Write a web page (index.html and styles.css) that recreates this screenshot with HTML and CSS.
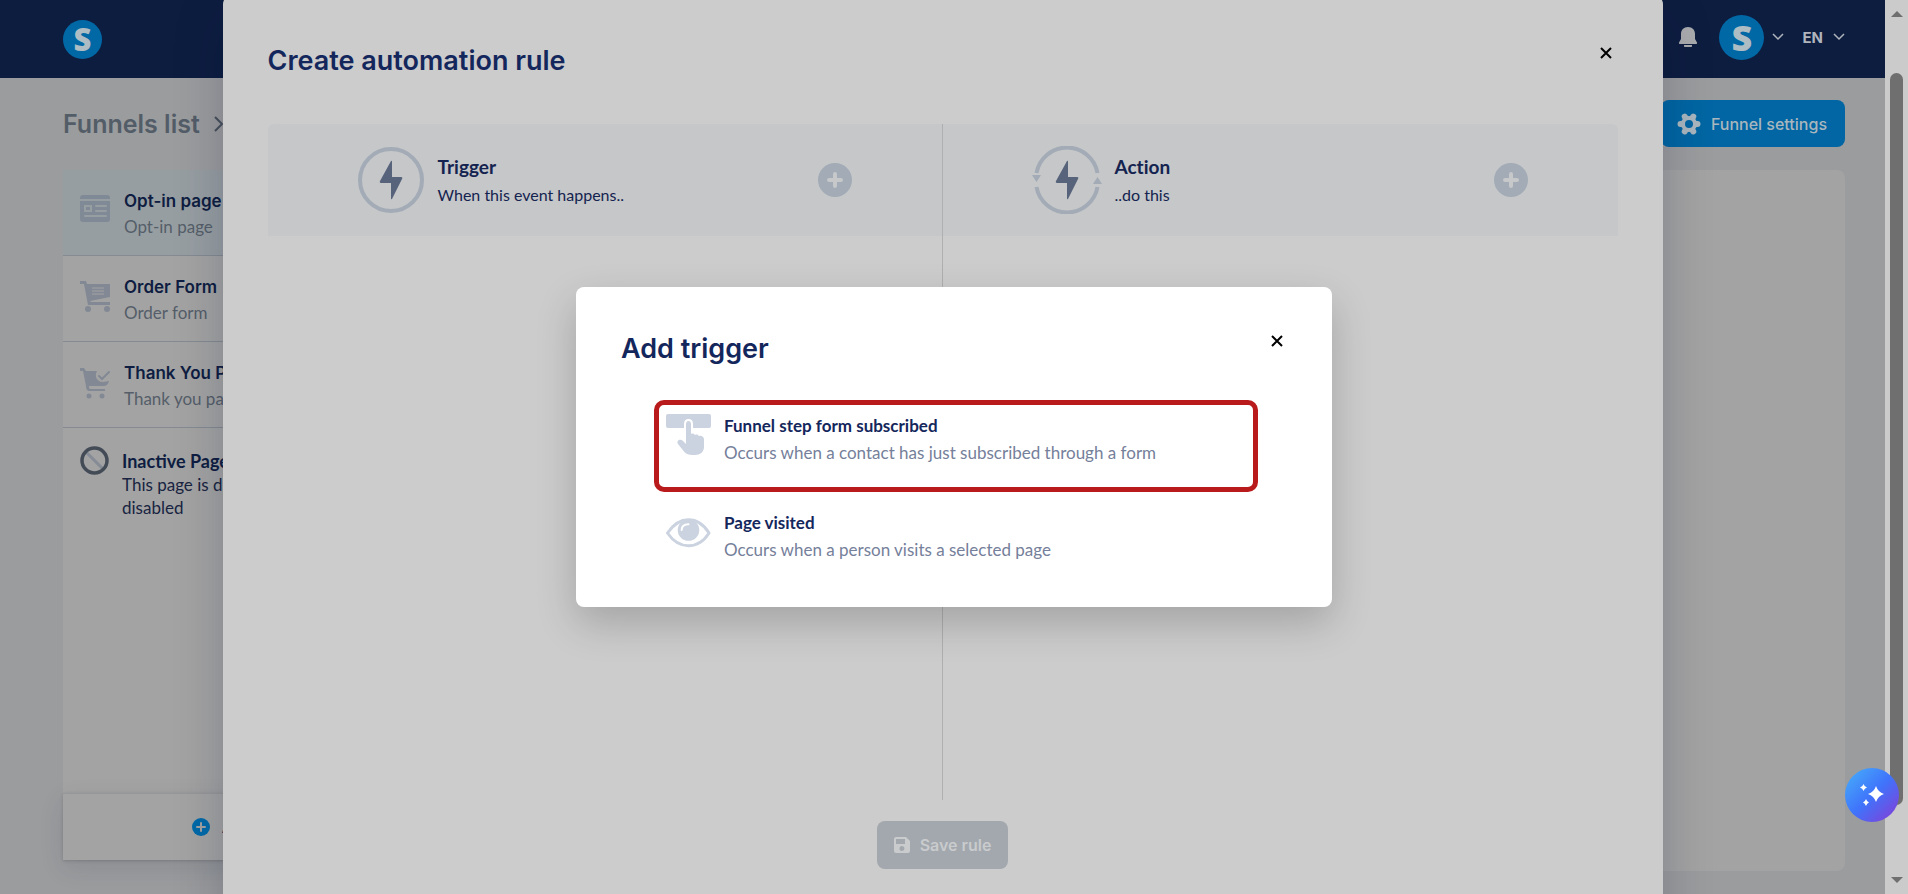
FILE: index.html
```
<!DOCTYPE html>
<html lang="en">
<head>
  <meta charset="UTF-8">
  <meta name="viewport" content="width=device-width, initial-scale=1.0">
  <title>Create automation rule</title>
  <link rel="stylesheet" href="styles.css">
</head>
<body>
  <div class="page">
    <header class="topbar">
      <a class="logo" href="#">S</a>
      <div class="topbar-right">
        <button class="icon-btn" aria-label="Notifications">
          <svg width="18" height="20" viewBox="0 0 18 20" fill="#a9abae"><path d="M9 0C4.600 0 2 3.200 2 7v5L0 15.500c-.3 1 .2 1.500 1 1.500h16c.8 0 1.300-.5 1-1.500L16 12V7c0-3.800-2.600-7-7-7z"/><path d="M5 18h8v1c0 .6-.4 1-1 1H6c-.6 0-1-.4-1-1z"/></svg>
        </button>
        <button class="profile" aria-label="Profile">
          <span class="avatar">S</span>
          <svg width="12" height="8" viewBox="0 0 12 8"><path class="chevron" d="M1 1l5 5 5-5"/></svg>
        </button>
        <button class="lang">EN
          <svg width="12" height="8" viewBox="0 0 12 8"><path class="chevron" d="M1 1l5 5 5-5"/></svg>
        </button>
      </div>
    </header>

    <div class="page-head">
      <nav class="breadcrumb">
        <a href="#">Funnels list</a>
        <svg width="10" height="16" viewBox="0 0 10 16"><path d="M1 1l7 7-7 7" fill="none" stroke="#48515c" stroke-width="2"/></svg>
      </nav>
      <button class="settings-btn">
        <svg width="24" height="22" viewBox="0 0 24 22"><g stroke="#a9b6be" stroke-width="6" stroke-linecap="round"><path d="M3.500 11h17M7.700 3.600l8.600 14.800M16.300 3.600L7.700 18.400"/></g><circle cx="12" cy="11" r="8" fill="#a9b6be"/><circle cx="12" cy="11" r="4" fill="#0166a3"/></svg>
        Funnel settings
      </button>
    </div>

    <main class="content">
      <aside class="steps">
        <ul class="step-list">
          <li class="step active">
            <svg width="30" height="32" viewBox="0 0 30 32"><path fill="#808996" d="M3 0h24a3 3 0 0 1 3 3v1H0V3a3 3 0 0 1 3-3zM0 6h30v18a3 3 0 0 1-3 3H3a3 3 0 0 1-3-3z"/><path fill="none" stroke="#979ea2" stroke-width="2" stroke-linecap="round" d="M5 11h6v5H5zM16 11h10M16 16h10M5 21h21"/></svg>
            <div><h4>Opt-in page</h4><p>Opt-in page</p></div>
          </li>
          <li class="step">
            <svg width="30" height="32" viewBox="0 0 30 32"><g fill="#828994"><path d="M0 0h6l1 3h23v13L10 20l1 1h19v3H8L4 3H0z"/><circle cx="8" cy="28" r="3"/><circle cx="27" cy="28" r="3"/></g><path stroke="#a3a3a3" stroke-width="1" d="M12 7h12M12 10h12M12 13h12"/></svg>
            <div><h4>Order Form</h4><p>Order form</p></div>
          </li>
          <li class="step">
            <svg width="30" height="32" viewBox="0 0 30 32"><g fill="#828994"><path d="M0 1h4l2 3h11c-3 5 0 11 6 11l6-1c-1 4-3 5-6 5H9c0 2 0 3 2 3h14v2H10c-3 0-4-2-4-5L3 4H0z"/><circle cx="9" cy="29" r="2.500"/><circle cx="22" cy="29" r="2.500"/></g><path fill="none" stroke="#828994" stroke-width="2" stroke-linecap="round" d="M19 9l3 3 7-7"/></svg>
            <div><h4>Thank You Page</h4><p>Thank you page</p></div>
          </li>
          <li class="step inactive">
            <svg width="29" height="29" viewBox="0 0 29 29" fill="none"><path d="M5 5l19 19" stroke="#858c96" stroke-width="3"/><circle cx="14.500" cy="14.500" r="12.500" stroke="#434b57" stroke-width="3.500"/></svg>
            <div><h4>Inactive Page</h4><p>This page is disabled<br>disabled</p></div>
          </li>
        </ul>
        <button class="add-step">
          <svg width="18" height="18" viewBox="0 0 18 18"><circle cx="9" cy="9" r="9" fill="#016aa8"/><path d="M9 5v8M5 9h8" stroke="#a3a3a3" stroke-width="2" stroke-linecap="round"/></svg>
          Add step
        </button>
      </aside>
      <section class="panel"></section>
    </main>

    <div class="rule-overlay">
      <div class="rule-modal">
        <div class="rule-head">
          <h2>Create automation rule</h2>
          <button class="close" aria-label="Close"><svg width="12" height="12" viewBox="0 0 12 12"><path d="M1 1l10 10M11 1L1 11"/></svg></button>
        </div>
        <div class="rule-columns">
          <div class="rule-column">
            <div class="rule-band">
              <svg width="68" height="68" viewBox="0 0 68 68"><circle cx="34" cy="34" r="31" fill="none" stroke="#a3abb6" stroke-width="4"/><path class="bolt" d="M34 15q1-1 1 1v15h9q2 0 1 2L35 53q-1 1-1-1V37h-9q-3 0-2-2z"/></svg>
              <div class="rule-text"><h3>Trigger</h3><p>When this event happens..</p></div>
              <button class="plus" aria-label="Add trigger"><svg width="34" height="34" viewBox="0 0 34 34"><circle cx="17" cy="17" r="17" fill="#a2abb6"/><path d="M17 11v12M11 17h12" stroke="#c6c8ca" stroke-width="4" stroke-linecap="round"/></svg></button>
            </div>
          </div>
          <div class="rule-column">
            <div class="rule-band">
              <svg class="action-icon" width="70" height="68" viewBox="0 0 70 68"><path d="M4.500 27a31 31 0 0 1 61 0M65.500 41a31 31 0 0 1-61 0" fill="none" stroke="#a3abb6" stroke-width="4"/><path d="M0 29h9l-4.500 7zM61 38h9l-4.500-7z" fill="#a3abb6"/><path class="bolt" d="M35 15q1-1 1 1v15h9q2 0 1 2L36 53q-1 1-1-1V37h-9q-3 0-2-2z"/></svg>
              <div class="rule-text"><h3>Action</h3><p>..do this</p></div>
              <button class="plus" aria-label="Add action"><svg width="34" height="34" viewBox="0 0 34 34"><circle cx="17" cy="17" r="17" fill="#a2abb6"/><path d="M17 11v12M11 17h12" stroke="#c6c8ca" stroke-width="4" stroke-linecap="round"/></svg></button>
            </div>
          </div>
        </div>
        <button class="save-btn">
          <svg width="16" height="16" viewBox="0 0 16 16"><path fill="#c9cbcd" fill-rule="evenodd" d="M2 0h10l4 4v10a2 2 0 0 1-2 2H2a2 2 0 0 1-2-2V2a2 2 0 0 1 2-2zm0 2v5h9V2zm6 7a2 2 0 1 0 0 5 2 2 0 0 0 0-5z"/></svg>
          Save rule
        </button>
      </div>
    </div>
  </div>

  <div class="scrollbar">
    <svg width="12" height="6" viewBox="0 0 12 6"><path d="M0 6l6-6 6 6z" fill="#6f6f6f"/></svg>
    <div class="track"><div class="thumb"></div></div>
    <svg width="12" height="6" viewBox="0 0 12 6"><path d="M0 0h12L6 6z" fill="#6f6f6f"/></svg>
  </div>

  <div class="trigger-overlay">
    <div class="trigger-modal">
      <div class="trigger-head">
        <h2>Add trigger</h2>
        <button class="close" aria-label="Close"><svg width="12" height="12" viewBox="0 0 12 12"><path d="M1 1l10 10M11 1L1 11"/></svg></button>
      </div>
      <div class="options">
        <button class="option selected">
          <svg width="45" height="42" viewBox="0 0 45 42"><rect x="0" y="0" width="45" height="14" rx="2" fill="#cbd3e0"/><path d="M20 10c0-4 5-4 5 0v10c2-1 3 0 4 1 2-1 3 0 4 1 2-1 5 1 5 3v8c0 5-4 8-9 8h-3c-5 0-8-3-10-6l-4-5c-2-3 2-6 5-3l3 3z" fill="#cbd3e0" stroke="#fff" stroke-width="4" paint-order="stroke"/></svg>
          <span class="option-text"><strong>Funnel step form subscribed</strong><span>Occurs when a contact has just subscribed through a form</span></span>
        </button>
        <button class="option">
          <svg class="eye" width="45" height="30" viewBox="0 0 46 30"><path d="M1.500 15C8 5.500 15 1.500 23 1.500S38 5.500 44 15C38 24.500 31 28 23 28S8 24.500 1.500 15z" fill="none" stroke="#cbd3e0" stroke-width="3" stroke-linejoin="round"/><circle cx="23" cy="12" r="11" fill="#cbd3e0"/><path d="M16 12c0-4 3-6 7-6" fill="none" stroke="#fff" stroke-width="2" stroke-linecap="round"/></svg>
          <span class="option-text"><strong>Page visited</strong><span>Occurs when a person visits a selected page</span></span>
        </button>
      </div>
    </div>
  </div>

  <button class="ai-btn" aria-label="AI assistant">
    <svg width="24" height="22" viewBox="0 0 24 22" fill="#fff"><path d="M16 2q2 6 8 8-6 2-8 8-2-6-8-8 6-2 8-8zM3.500 0Q4.500 3 7 3.500 4.500 4 3.500 7 2.500 4 0 3.500 2.500 3 3.500 0zM6 15q1 3 3 3.500Q7 19 6 22q-1-3-3-3.500Q5 18 6 15z"/></svg>
  </button>
</body>
</html>
```

FILE: styles.css
```
* { box-sizing: border-box; }
body { margin: 0; height: 100vh; display: flex; overflow: hidden; position: relative; font-family: Lato, sans-serif; font-size: 16px; font-variant-ligatures: none; color: #14234f; background: #9b9c9e; }
h2, h3, h4, p, ul { margin: 0; padding: 0; }
button { font: inherit; color: inherit; border: 0; padding: 0; background: none; cursor: pointer; }
a { color: inherit; text-decoration: none; }
svg { flex: none; display: block; }

/* page behind the dialogs */
.page { flex: 1; min-width: 0; display: flex; flex-direction: column; position: relative; overflow: hidden; }
.topbar { height: 78px; flex: none; padding: 0 40px 0 63px; display: flex; align-items: center; justify-content: space-between; background: #0d1d40; color: #b0b4bc; }
.logo, .avatar { display: flex; align-items: center; justify-content: center; border-radius: 50%; background: #0168a6; color: #aebcc4; font-family: "Open Sans", sans-serif; font-weight: 800; }
.logo { width: 39px; height: 39px; font-size: 31px; line-height: 39px; }
.avatar { width: 45px; height: 45px; font-size: 36px; line-height: 45px; }
.topbar-right { display: flex; align-items: center; height: 74px; align-self: flex-start; }
.profile { display: flex; align-items: center; gap: 8px; margin: 0 18px 0 22px; }
.lang { display: flex; align-items: center; gap: 10px; font: 700 15px Inter, sans-serif; }
.chevron { fill: none; stroke: #b0b4bc; stroke-width: 1.5; }

.page-head { display: flex; justify-content: space-between; align-items: center; padding: 22px 40px 23px 63px; }
.breadcrumb { display: flex; align-items: center; gap: 14px; font: 600 25px Inter, sans-serif; color: #535d68; }
.settings-btn { height: 47px; padding: 0 18px 0 16px; display: flex; align-items: center; gap: 10px; border-radius: 8px; background: #0166a3; color: #a9b6be; font: 500 16px Inter, sans-serif; }

.content { flex: 1; min-height: 0; display: flex; gap: 24px; padding: 0 40px 23px 63px; }
.steps { width: 356px; margin-bottom: 11px; display: flex; flex-direction: column; background: #a3a3a3; }
.step-list { flex: 1; list-style: none; }
.step { display: flex; gap: 14px; height: 86px; padding: 21px 17px 0; border-bottom: 1px solid #858b91; }
.step svg { margin-top: 4px; }
.step.active { background: #979ea2; }
.step.inactive { gap: 13px; border: 0; height: auto; }
.step.inactive svg { margin-top: -3px; }
.step h4 { font: 600 17px/20px Inter, sans-serif; color: #0e1d41; white-space: nowrap; }
.step p { margin-top: 4px; font-size: 17px; line-height: 24px; color: #555e69; white-space: nowrap; }
.step.inactive h4 { font-family: Lato, sans-serif; font-weight: 700; font-size: 18px; line-height: 24px; }
.step.inactive p { margin-top: 0; line-height: 23px; color: #182441; }
.add-step { height: 67px; display: flex; align-items: center; justify-content: center; gap: 12px; border-top: 1px solid #969798; box-shadow: 0 8px 24px rgba(20, 30, 60, .12), 0 1px 3px rgba(0, 0, 0, .15); color: #14234f; font: 500 16px Inter, sans-serif; }
.panel { flex: 1; border-radius: 8px; background: #a3a3a3; }

/* automation rule dialog */
.rule-overlay { position: absolute; inset: 0; display: flex; justify-content: center; }
.rule-modal { width: 1440px; height: calc(100vh + 60px); margin-top: -4px; padding: 46px 45px 0; display: flex; flex-direction: column; align-items: center; border-radius: 8px; background: #ccc; box-shadow: 0 20px 50px rgba(10, 20, 50, .22); flex: none; }
.rule-head { width: 100%; display: flex; justify-content: space-between; align-items: flex-start; height: 82px; }
h2 { font: 600 27px/38px Inter, sans-serif; color: #14275c; }
.close { width: 24px; height: 22px; display: flex; align-items: center; justify-content: center; }
.close path { stroke: #000; stroke-width: 2; fill: none; }
.rule-columns { width: 100%; height: calc(100vh - 218px); display: grid; grid-template-columns: 1fr 1fr; }
.rule-column:first-child { border-right: 1px solid #afafb0; }
.rule-band { height: 112px; display: flex; align-items: center; gap: 13px; padding: 0 90px 0 89px; background: #c5c7c9; border-radius: 6px 0 0 0; }
.rule-column + .rule-column .rule-band { border-radius: 0 6px 0 0; }
.rule-text { flex: 1; }
.rule-text h3 { font-size: 19px; line-height: 28px; font-weight: 700; }
.rule-text p { margin-top: 2px; line-height: 24px; }
.bolt { fill: #56637a; }
.save-btn { margin-top: 21px; height: 48px; padding: 0 17px; display: flex; align-items: center; gap: 10px; border-radius: 8px; background: #a2a8ad; color: #c9cbcd; font: 600 16px Inter, sans-serif; }

/* add trigger dialog */
.trigger-overlay { position: absolute; inset: 0; display: flex; align-items: center; justify-content: center; }
.trigger-modal { width: 756px; height: 320px; padding: 43px 43px 0 45px; border-radius: 8px; background: #fff; box-shadow: 0 16px 40px rgba(0, 0, 0, .2); }
.trigger-head { display: flex; justify-content: space-between; height: 70px; }
.options { display: flex; flex-direction: column; gap: 5px; padding: 0 31px 0 33px; }
.option { height: 92px; display: flex; align-items: flex-start; gap: 13px; padding: 9px 7px; border: 5px solid transparent; border-radius: 10px; text-align: left; }
.option.selected { border-color: #b91b1c; }
.eye { margin-top: 7px; }
.option-text { display: flex; flex-direction: column; gap: 3px; font-size: 17px; line-height: 24px; color: #75809a; white-space: nowrap; }
.option-text strong { font-weight: 700; color: #14275c; }

.scrollbar { width: 23px; flex: none; display: flex; flex-direction: column; align-items: center; padding: 11px 0; background: #cbcbcb; }
.track { flex: 1; width: 13px; padding: 56px 0 72px; display: flex; }
.thumb { flex: 1; border-radius: 7px; background: #6f6f6f; }
.ai-btn { position: absolute; right: 9px; bottom: 72px; width: 54px; height: 54px; display: flex; align-items: center; justify-content: center; border-radius: 50%; background: linear-gradient(135deg, #45a5fa 10%, #3f74fb 50%, #7a45dc 90%); }
```
